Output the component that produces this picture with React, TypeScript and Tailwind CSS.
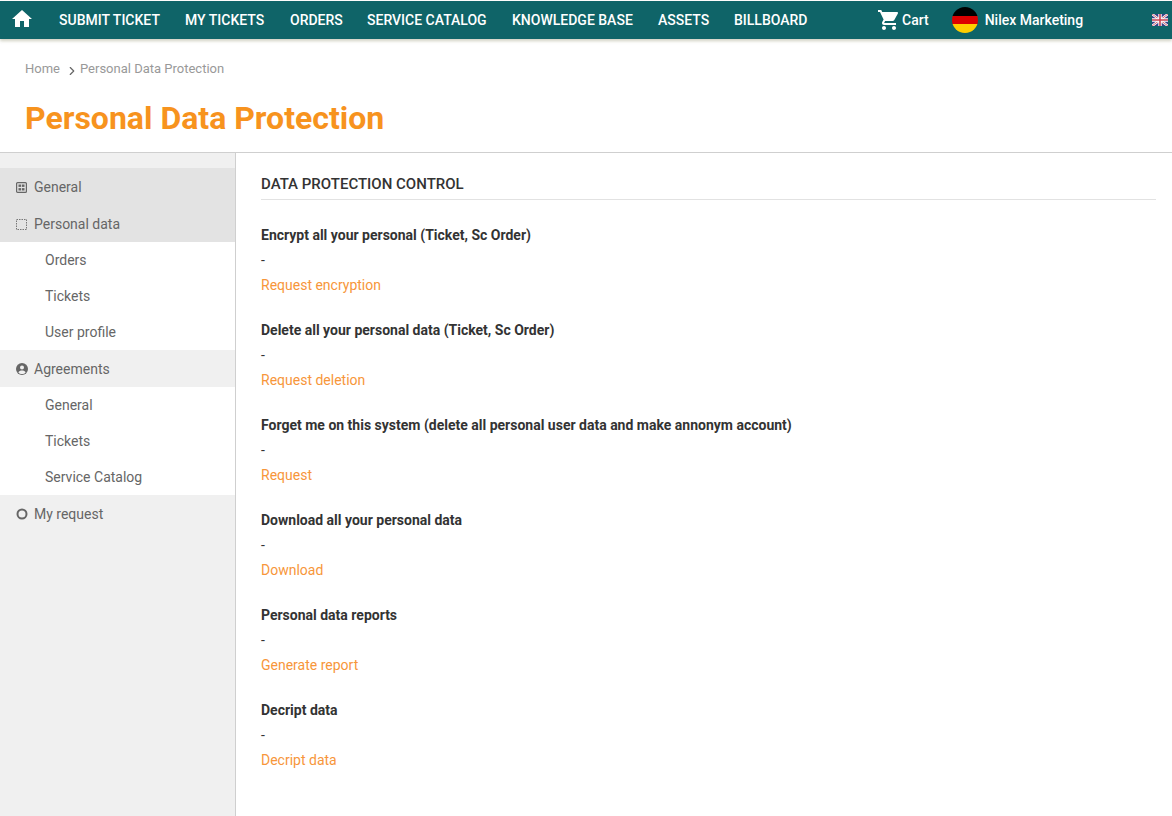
import { ChevronRight } from "lucide-react";

const navItems = [
  { label: "SUBMIT TICKET", width: "w-[126px]" },
  { label: "MY TICKETS", width: "w-[105px]" },
  { label: "ORDERS", width: "w-[77px]" },
  { label: "SERVICE CATALOG", width: "w-[145px]" },
  { label: "KNOWLEDGE BASE", width: "w-[146px]" },
  { label: "ASSETS", width: "w-[76px]" },
  { label: "BILLBOARD", width: "w-[90px]" },
];

const sections = [
  { title: "Encrypt all your personal (Ticket, Sc Order)", link: "Request encryption" },
  { title: "Delete all your personal data (Ticket, Sc Order)", link: "Request deletion" },
  { title: "Forget me on this system (delete all personal user data and make annonym account)", link: "Request" },
  { title: "Download all your personal data", link: "Download" },
  { title: "Personal data reports", link: "Generate report" },
  { title: "Decript data", link: "Decript data" },
];

function HomeIcon() {
  return (
    <svg width="24" height="24" viewBox="0 0 24 24" fill="#fff" className="ml-[10px] mb-[2px] shrink-0">
      <path d="M10 20v-6h4v6h5v-8h3L12 3 2 12h3v8z" />
    </svg>
  );
}

function CartIcon() {
  return (
    <svg width="24" height="24" viewBox="0 0 24 24" fill="#fff" className="ml-[53px] shrink-0">
      <path d="M7 18c-1.1 0-1.99.9-1.99 2S5.9 22 7 22s2-.9 2-2-.9-2-2-2zM1 2v2h2l3.6 7.59-1.35 2.45c-.16.28-.25.61-.25.96 0 1.1.9 2 2 2h12v-2H7.42c-.14 0-.25-.11-.25-.25l.03-.12.9-1.63h7.45c.75 0 1.41-.41 1.75-1.03l3.58-6.49c.08-.14.12-.31.12-.48 0-.55-.45-1-1-1H5.21l-.94-2H1zm16 16c-1.1 0-1.99.9-1.99 2s.89 2 1.99 2 2-.9 2-2-.9-2-2-2z" />
    </svg>
  );
}

function GeneralIcon() {
  return (
    <svg width="11" height="11" viewBox="0 0 11 11" fill="none">
      <rect x="0.6" y="0.6" width="9.8" height="9.8" rx="1" stroke="#666" strokeWidth="1.2" />
      <rect x="2.5" y="2.5" width="2.6" height="2.4" fill="#666" />
      <rect x="5.9" y="2.5" width="2.6" height="2.4" fill="#666" />
      <rect x="2.5" y="6.1" width="2.6" height="2.4" fill="#666" />
      <rect x="5.9" y="6.1" width="2.6" height="2.4" fill="#666" />
    </svg>
  );
}

function DashedIcon() {
  return (
    <svg width="11" height="11" viewBox="0 0 11 11" fill="none">
      <rect x="0.5" y="0.5" width="10" height="10" stroke="#777" strokeWidth="1" strokeDasharray="1.5 1" />
    </svg>
  );
}

function UserCircleIcon() {
  return (
    <svg width="12" height="12" viewBox="0 0 12 12">
      <circle cx="6" cy="6" r="6" fill="#666" />
      <circle cx="6" cy="4.6" r="2" fill="#f0f0f0" />
      <path d="M2.4 9.4C3 7.9 4.4 7.4 6 7.4s3 .5 3.6 2C8.7 10.4 7.4 11 6 11s-2.7-.6-3.6-1.6z" fill="#f0f0f0" />
    </svg>
  );
}

function RingIcon() {
  return (
    <svg width="12" height="12" viewBox="0 0 12 12" fill="none">
      <circle cx="6" cy="6" r="4.5" stroke="#666" strokeWidth="2" />
    </svg>
  );
}

function GermanFlag() {
  return (
    <div className="w-[26px] h-[26px] rounded-full overflow-hidden flex flex-col">
      <div className="flex-1 bg-black" />
      <div className="flex-1 bg-[#dd0000]" />
      <div className="flex-1 bg-[#ffce00]" />
    </div>
  );
}

function UkFlag() {
  return (
    <svg width="16" height="12" viewBox="0 0 16 12">
      <rect width="16" height="12" fill="#3a3f86" />
      <path d="M0 0L16 12M16 0L0 12" stroke="#fff" strokeWidth="2.4" />
      <path d="M0 0L16 12M16 0L0 12" stroke="#c8404f" strokeWidth="0.8" />
      <path d="M8 0V12M0 6H16" stroke="#fff" strokeWidth="3.4" />
      <path d="M8 0V12M0 6H16" stroke="#c8404f" strokeWidth="1.6" />
    </svg>
  );
}

function SideHeader({ icon, label, className }: { icon: React.ReactNode; label: string; className: string }) {
  return (
    <div className={`flex items-center h-[37px] pl-[16px] pt-[1px] text-[14px] text-[#666] ${className}`}>
      <span className="w-[18px] flex items-center">{icon}</span>
      {label}
    </div>
  );
}

function SideLink({ label }: { label: string }) {
  return <div className="h-[36px] flex items-center pl-[45px] bg-white text-[14px] text-[#666]">{label}</div>;
}

export default function App() {
  return (
    <div className="h-[816px] overflow-hidden bg-white font-['Roboto',sans-serif] flex flex-col">
      <div className="pt-px bg-white">
        <header className="h-[38px] bg-[#0f6468] flex items-center text-white shadow-[0_2px_3px_rgba(120,120,80,0.35)]">
          <HomeIcon />
          <nav className="flex ml-[25px] text-[14px] font-medium">
            {navItems.map((item) => (
              <span key={item.label} className={`${item.width} whitespace-nowrap`}>
                {item.label}
              </span>
            ))}
          </nav>
          <CartIcon />
          <span className="ml-[1px] text-[14px] font-medium">Cart</span>
          <span className="ml-[23px]">
            <GermanFlag />
          </span>
          <span className="ml-[7px] text-[14px] font-medium">Nilex Marketing</span>
          <span className="ml-auto mr-[4px] flex">
            <UkFlag />
          </span>
        </header>
      </div>

      <div className="h-[114px] shrink-0 border-b border-[#cfcfcf] pl-[25px] pt-[22px]">
        <div className="flex items-center h-[16px] text-[13px] text-[#999]">
          Home
          <ChevronRight className="w-[14px] h-[14px] ml-[5px] mr-[1px] mt-[3px] text-[#666]" strokeWidth={2} />
          Personal Data Protection
        </div>
        <h1 className="mt-[22px] text-[32px] leading-[38px] font-bold text-[#f7931e]">Personal Data Protection</h1>
      </div>

      <div className="flex flex-1 min-h-0">
        <aside className="w-[236px] shrink-0 bg-[#f0f0f0] border-r border-[#cfcfcf] pt-[15px]">
          <SideHeader icon={<GeneralIcon />} label="General" className="bg-[#e3e3e3]" />
          <SideHeader icon={<DashedIcon />} label="Personal data" className="bg-[#e3e3e3]" />
          <SideLink label="Orders" />
          <SideLink label="Tickets" />
          <SideLink label="User profile" />
          <SideHeader icon={<UserCircleIcon />} label="Agreements" className="bg-[#f0f0f0]" />
          <SideLink label="General" />
          <SideLink label="Tickets" />
          <SideLink label="Service Catalog" />
          <SideHeader icon={<RingIcon />} label="My request" className="bg-[#f0f0f0]" />
        </aside>

        <main className="flex-1 pl-[25px] pr-[16px] pt-[21px]">
          <h2 className="h-[26px] border-b border-[#e2e2e2] text-[15px] leading-[20px] font-medium text-[#333]">
            DATA PROTECTION CONTROL
          </h2>
          <div className="mt-[23px] flex flex-col gap-[20px] text-[14px] leading-[25px]">
            {sections.map((s) => (
              <div key={s.link + s.title}>
                <div className="font-bold text-[#333]">{s.title}</div>
                <div className="text-[#333]">-</div>
                <div className="text-[#f7963a]">{s.link}</div>
              </div>
            ))}
          </div>
        </main>
      </div>
    </div>
  );
}
